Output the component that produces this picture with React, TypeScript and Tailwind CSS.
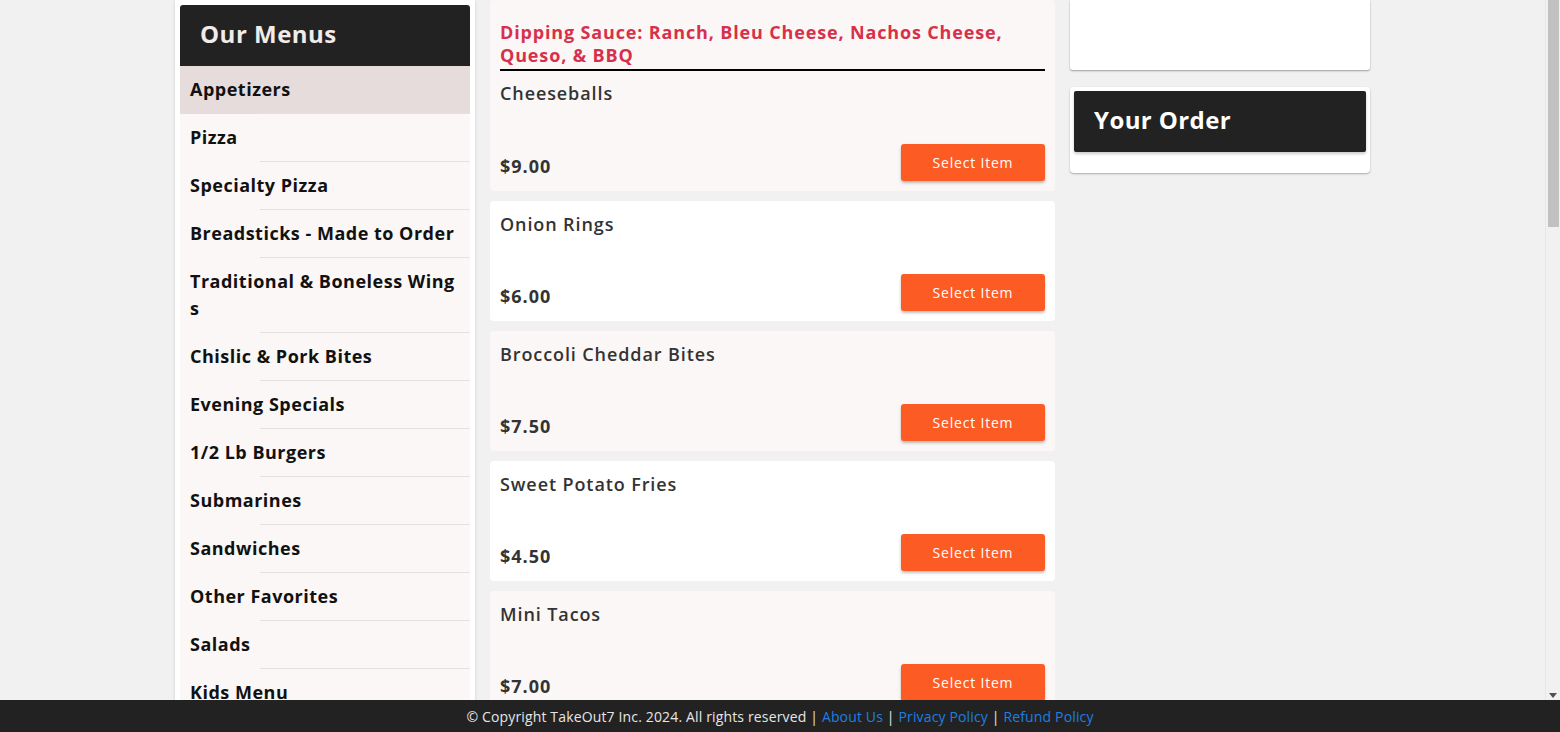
import React from "react";

const categories = [
  "Appetizers",
  "Pizza",
  "Specialty Pizza",
  "Breadsticks - Made to Order",
  "Traditional & Boneless Wing\ns",
  "Chislic & Pork Bites",
  "Evening Specials",
  "1/2 Lb Burgers",
  "Submarines",
  "Sandwiches",
  "Other Favorites",
  "Salads",
  "Kids Menu",
  "Desserts",
  "Beverages",
];

const items = [
  { name: "Cheeseballs", price: "$9.00" },
  { name: "Onion Rings", price: "$6.00" },
  { name: "Broccoli Cheddar Bites", price: "$7.50" },
  { name: "Sweet Potato Fries", price: "$4.50" },
  { name: "Mini Tacos", price: "$7.00" },
  { name: "Mozzarella Sticks", price: "$8.00" },
  { name: "Jalapeño Poppers", price: "$8.00" },
  { name: "French Fries", price: "$4.00" },
  { name: "Tater Tots", price: "$4.00" },
  { name: "Cheese Curds", price: "$8.50" },
  { name: "Pickle Fries", price: "$7.00" },
  { name: "Breaded Mushrooms", price: "$7.00" },
  { name: "Loaded Fries", price: "$9.50" },
  { name: "Chicken Strips", price: "$9.00" },
  { name: "Potato Skins", price: "$8.00" },
];

const font = { fontFamily: '"Open Sans", "Liberation Sans", sans-serif' };

export default function App() {
  return (
    <div className="h-screen flex flex-col bg-[#f1f1f1]" style={font}>
      <div className="flex-1 flex min-h-0">
        <div className="flex-1 overflow-hidden">
          <div className="w-[1195px] mx-auto flex items-start gap-[15px] pb-10">
            {/* Categories */}
            <div className="w-[300px] shrink-0 bg-white p-[5px] shadow-[0_1px_3px_rgba(0,0,0,0.15)]">
              <div className="bg-[#222] rounded-t-[3px] h-[61px] flex items-center px-5 pb-1">
                <h2 className="text-[24px] font-bold text-[#f0ece9] tracking-[0.5px]">Our Menus</h2>
              </div>
              {categories.map((c, i) => (
                <div key={c} className={i === 0 ? "bg-[#e6dcdc]" : "bg-[#faf7f6]"}>
                  <div className="px-2.5 py-2.5 text-[18px] leading-[27px] font-bold text-[#111] whitespace-pre-line tracking-[0.5px]">
                    {c}
                  </div>
                  <div className="ml-[80px] border-b border-[#e4e2e1]" />
                </div>
              ))}
            </div>

            {/* Items */}
            <div className="w-[565px] shrink-0 flex flex-col gap-[10px]">
              {items.map((it, i) => (
                <div
                  key={it.name}
                  className={`rounded-[4px] p-2.5 ${i % 2 === 0 ? "bg-[#faf7f6]" : "bg-white"}`}
                >
                  {i === 0 && (
                    <h3 className="mt-[11px] pb-[2px] border-b-2 border-black text-[18px] leading-[23px] font-bold text-[#d8304a] tracking-[0.85px] mb-[9px]">
                      Dipping Sauce: Ranch, Bleu Cheese, Nachos Cheese, Queso, &amp; BBQ
                    </h3>
                  )}
                  <div className="text-[18px] leading-[26px] font-semibold text-[#333] tracking-[0.9px]">{it.name}</div>
                  <div className={`flex justify-between items-end ${i === 0 ? "mt-[38px]" : "mt-[37px]"}`}>
                    <span className="text-[18px] leading-[24px] font-bold text-[#333] tracking-[1px] mb-[3px]">{it.price}</span>
                    <button className="w-[144px] h-[37px] rounded-[3px] bg-[#fd5b24] text-white text-[14px] tracking-[0.8px] shadow-[0_2px_3px_rgba(0,0,0,0.25)]">
                      Select Item
                    </button>
                  </div>
                </div>
              ))}
            </div>

            {/* Order */}
            <div className="w-[300px] shrink-0 flex flex-col gap-[17px]">
              <div className="h-[70px] bg-white rounded-b-[3px] shadow-[0_1px_2px_rgba(0,0,0,0.35)]" />
              <div className="bg-white rounded-[4px] pt-1 px-1 pb-[21px] shadow-[0_1px_2px_rgba(0,0,0,0.3)]">
                <div className="bg-[#222] rounded-[2px] h-[61px] flex items-center px-5 pb-1 shadow-[0_2px_3px_rgba(0,0,0,0.2)]">
                  <h2 className="text-[24px] font-bold text-white tracking-[0.4px]">Your Order</h2>
                </div>
              </div>
            </div>
          </div>
        </div>

        {/* Scrollbar */}
        <div className="w-[15px] shrink-0 bg-[#f1f1f1] border-l border-[#e8e8e8] flex flex-col justify-between items-center pb-[2px]">
          <div className="w-[11px] ml-[1px] h-[227px] bg-[#c1c1c1]" />
          <svg width="8" height="5" viewBox="0 0 8 5">
            <path d="M0 0h8L4 5z" fill="#505050" />
          </svg>
        </div>
      </div>

      <footer className="h-8 shrink-0 bg-[#222] flex items-center justify-center text-[14px] text-[#e6e6e6] tracking-[0.15px]">
        <span>
          © Copyright TakeOut7 Inc. 2024. All rights reserved |{" "}
          <a className="text-[#1e7fe0]">About Us</a> | <a className="text-[#1e7fe0]">Privacy Policy</a> |{" "}
          <a className="text-[#1e7fe0]">Refund Policy</a>
        </span>
      </footer>
    </div>
  );
}
